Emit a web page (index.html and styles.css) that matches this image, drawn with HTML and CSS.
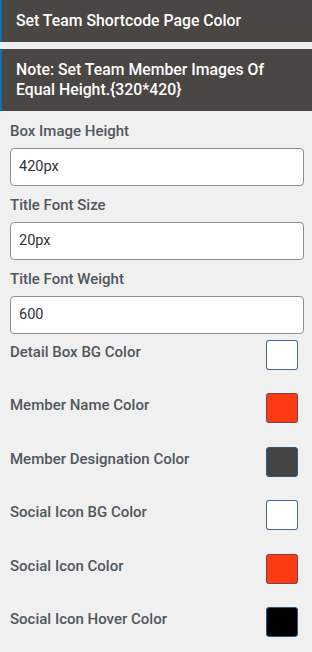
FILE: index.html
```html
<!DOCTYPE html>
<html>
<head>
<meta charset="utf-8">
<link rel="stylesheet" href="styles.css">
</head>
<body>
<div class="panel">
  <div class="bar bar-title">Set Team Shortcode Page Color</div>
  <div class="bar bar-note">Note: Set Team Member Images Of Equal Height.{320*420}</div>
  <div class="fields">
    <div class="field">
      <label class="label">Box Image Height</label>
      <div class="input">420px</div>
    </div>
    <div class="field">
      <label class="label">Title Font Size</label>
      <div class="input">20px</div>
    </div>
    <div class="field">
      <label class="label">Title Font Weight</label>
      <div class="input">600</div>
    </div>
  </div>
  <div class="colors">
    <div class="crow"><span class="label">Detail Box BG Color</span><span class="swatch sw-white"></span></div>
    <div class="crow"><span class="label">Member Name Color</span><span class="swatch sw-red"></span></div>
    <div class="crow"><span class="label">Member Designation Color</span><span class="swatch sw-dark"></span></div>
    <div class="crow"><span class="label">Social Icon BG Color</span><span class="swatch sw-white"></span></div>
    <div class="crow"><span class="label">Social Icon Color</span><span class="swatch sw-red"></span></div>
    <div class="crow"><span class="label">Social Icon Hover Color</span><span class="swatch sw-black"></span></div>
  </div>
</div>
</body>
</html>
```

FILE: styles.css
```css
html, body {
  margin: 0;
  padding: 0;
  background: #f0f0f0;
}
body {
  font-family: Roboto, "Liberation Sans", sans-serif;
  width: 312px;
  height: 652px;
  overflow: hidden;
}
.panel {
  display: flex;
  flex-direction: column;
}
.bar {
  background: #4a4644;
  color: #ffffff;
  border-left: 2px solid #0a73b7;
  font-size: 15.8px;
  font-weight: 500;
  padding-left: 14px;
  padding-right: 30px;
}
.bar-title {
  height: 42px;
  line-height: 42px;
  box-sizing: border-box;
}
.bar-note {
  margin-top: 7px;
  padding-top: 11px;
  padding-bottom: 11px;
  line-height: 20px;
}
.fields {
  display: flex;
  flex-direction: column;
  padding: 10px 8px 0 10px;
}
.field {
  display: flex;
  flex-direction: column;
  margin-bottom: 9px;
}
.label {
  font-size: 15px;
  font-weight: 500;
  color: #50575e;
  line-height: 20px;
  display: block;
}
.input {
  margin-top: 7px;
  height: 38px;
  box-sizing: border-box;
  background: #ffffff;
  border: 1px solid #8c8f94;
  border-radius: 4px;
  padding: 0 8px;
  font-size: 14.5px;
  line-height: 36px;
  color: #2c3338;
}
.colors {
  display: flex;
  flex-direction: column;
  padding: 0 14px 0 10px;
  margin-top: -3px;
}
.crow {
  display: flex;
  justify-content: space-between;
  align-items: flex-start;
  height: 53.4px;
}
.crow .label {
  padding-top: 2px;
}
.swatch {
  width: 32px;
  height: 30px;
  box-sizing: border-box;
  border-radius: 3px;
  border: 1px solid rgba(18, 62, 110, 0.78);
}
.sw-white { background: #ffffff; }
.sw-red { background: #fd3a12; border-color: rgba(70, 70, 100, 0.7); }
.sw-dark { background: #444444; border-color: #2d5a80; }
.sw-black { background: #000000; border-color: #2d5a80; }
```
